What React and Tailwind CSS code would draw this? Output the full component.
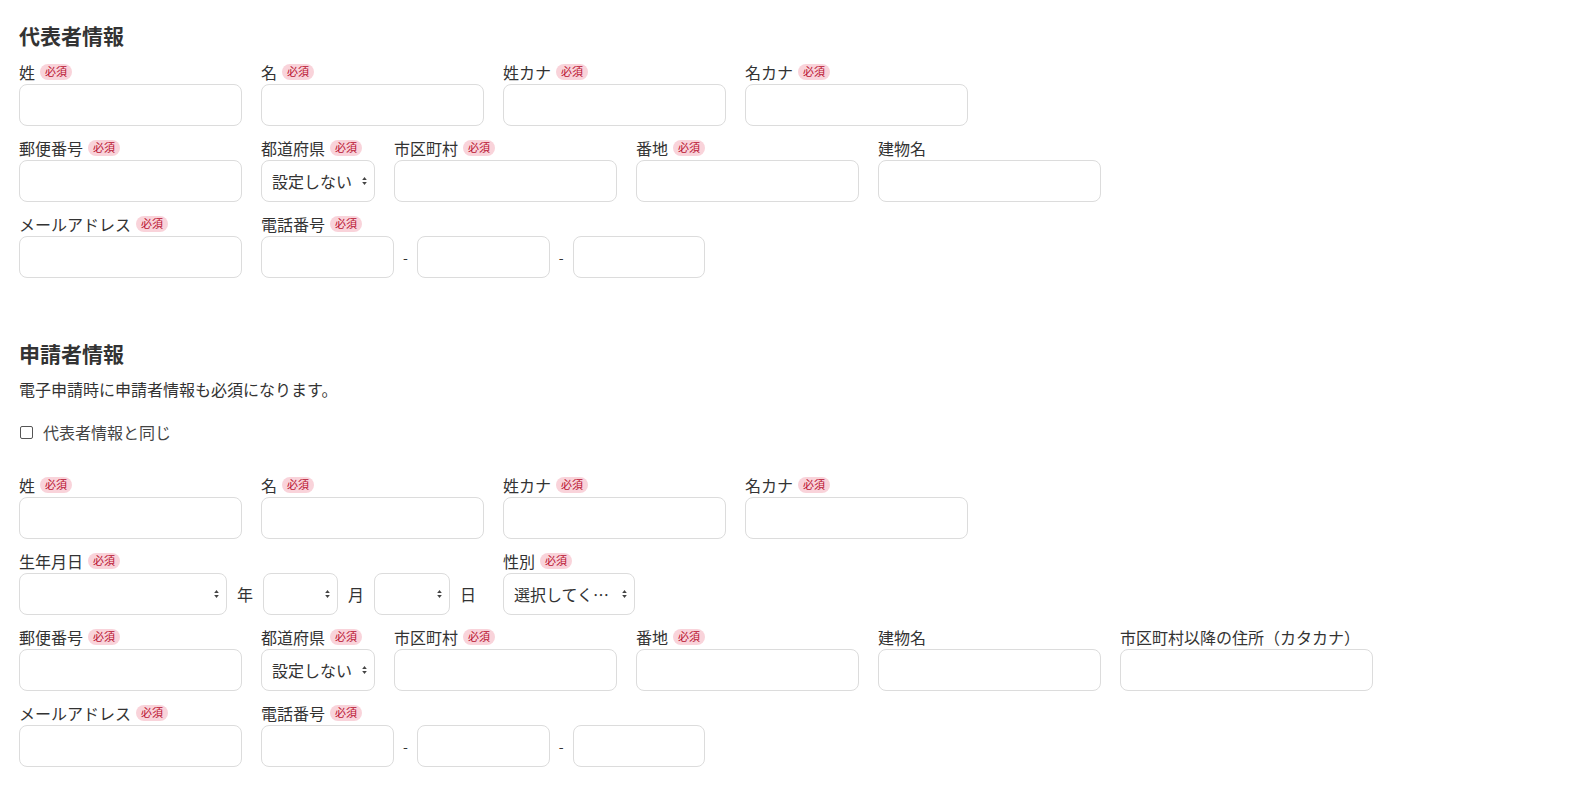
import React from "react";

const font = {
  fontFamily: '"Noto Sans CJK JP", "Noto Sans", sans-serif',
};

const Required = () => (
  <span className="ml-[5px] inline-flex h-[16px] items-center rounded-full bg-[#f9d3da] px-[5px] text-[11px] leading-none text-[#b8102f]">
    必須
  </span>
);

const Label = ({ text, required }) => (
  <div className="flex h-[25px] items-center whitespace-nowrap text-[16px] text-[#333]">
    <span>{text}</span>
    {required && <Required />}
  </div>
);

const Input = ({ w = "w-[223px]" }) => (
  <input
    type="text"
    className={`${w} h-[42px] shrink-0 rounded-[8px] border border-[#dcdcdc] bg-white px-3 text-[16px] outline-none`}
  />
);

const Arrows = () => (
  <svg
    className="pointer-events-none absolute right-[8px] top-1/2 -translate-y-1/2"
    width="5"
    height="9"
    viewBox="0 0 5 9"
  >
    <path d="M2.5 0.5 L4.8 3.6 L0.2 3.6 Z" fill="#444" />
    <path d="M2.5 8.5 L4.8 5.4 L0.2 5.4 Z" fill="#444" />
  </svg>
);

const Select = ({ w, value = "" }) => (
  <div className={`relative shrink-0 ${w}`}>
    <select
      defaultValue={value}
      className="h-[42px] w-full appearance-none truncate rounded-[8px] border border-[#dcdcdc] bg-white pl-[10px] pr-[16px] text-[16px] text-[#333] outline-none"
      style={font}
    >
      <option value={value}>{value}</option>
    </select>
    <Arrows />
  </div>
);

const Field = ({ label, required, children }) => (
  <div className="flex shrink-0 flex-col">
    <Label text={label} required={required} />
    <div className="flex items-center">{children}</div>
  </div>
);

const Phone = () => (
  <Field label="電話番号" required>
    <Input w="w-[133px]" />
    <span className="mx-[9px] text-[14px] text-[#333]">-</span>
    <Input w="w-[133px]" />
    <span className="mx-[9px] text-[14px] text-[#333]">-</span>
    <Input w="w-[132px]" />
  </Field>
);

const NameRow = () => (
  <div className="flex gap-[19px]">
    <Field label="姓" required>
      <Input />
    </Field>
    <Field label="名" required>
      <Input />
    </Field>
    <Field label="姓カナ" required>
      <Input />
    </Field>
    <Field label="名カナ" required>
      <Input />
    </Field>
  </div>
);

const AddressRow = ({ kana }) => (
  <div className="flex gap-[19px]">
    <Field label="郵便番号" required>
      <Input />
    </Field>
    <Field label="都道府県" required>
      <Select w="w-[114px]" value="設定しない" />
    </Field>
    <Field label="市区町村" required>
      <Input />
    </Field>
    <Field label="番地" required>
      <Input />
    </Field>
    <Field label="建物名">
      <Input />
    </Field>
    {kana && (
      <Field label="市区町村以降の住所（カタカナ）">
        <Input w="w-[253px]" />
      </Field>
    )}
  </div>
);

const ContactRow = () => (
  <div className="flex gap-[19px]">
    <Field label="メールアドレス" required>
      <Input />
    </Field>
    <Phone />
  </div>
);

const App = () => {
  return (
    <div
      className="h-[796px] overflow-hidden bg-white px-[19px] pt-[21px]"
      style={font}
    >
      <section>
        <h2 className="h-[28px] text-[21px] font-bold leading-[28px] text-[#333]">
          代表者情報
        </h2>
        <div className="mt-[10px] flex flex-col gap-[9px]">
          <NameRow />
          <AddressRow />
          <ContactRow />
        </div>
      </section>

      <section className="mt-[61px]">
        <h2 className="h-[28px] text-[21px] font-bold leading-[28px] text-[#333]">
          申請者情報
        </h2>
        <p className="mt-[10px] h-[24px] text-[16px] leading-[24px] text-[#333]">
          電子申請時に申請者情報も必須になります。
        </p>
        <label className="mt-[19px] flex h-[24px] items-center gap-[10px] text-[16px] text-[#444]">
          <input
            type="checkbox"
            className="ml-px h-[13px] w-[13px] appearance-none rounded-[2px] border border-[#555] bg-white"
          />
          <span>代表者情報と同じ</span>
        </label>
        <div className="mt-[28px] flex flex-col gap-[9px]">
          <NameRow />
          <div className="flex gap-[19px]">
            <Field label="生年月日" required>
              <div className="flex w-[465px] items-center gap-[10px] text-[16px] text-[#333]">
                <Select w="w-[208px]" />
                <span>年</span>
                <Select w="w-[75px]" />
                <span>月</span>
                <Select w="w-[76px]" />
                <span>日</span>
              </div>
            </Field>
            <Field label="性別" required>
              <Select w="w-[132px]" value="選択してください" />
            </Field>
          </div>
          <AddressRow kana />
          <ContactRow />
        </div>
      </section>
    </div>
  );
};

export default App;
